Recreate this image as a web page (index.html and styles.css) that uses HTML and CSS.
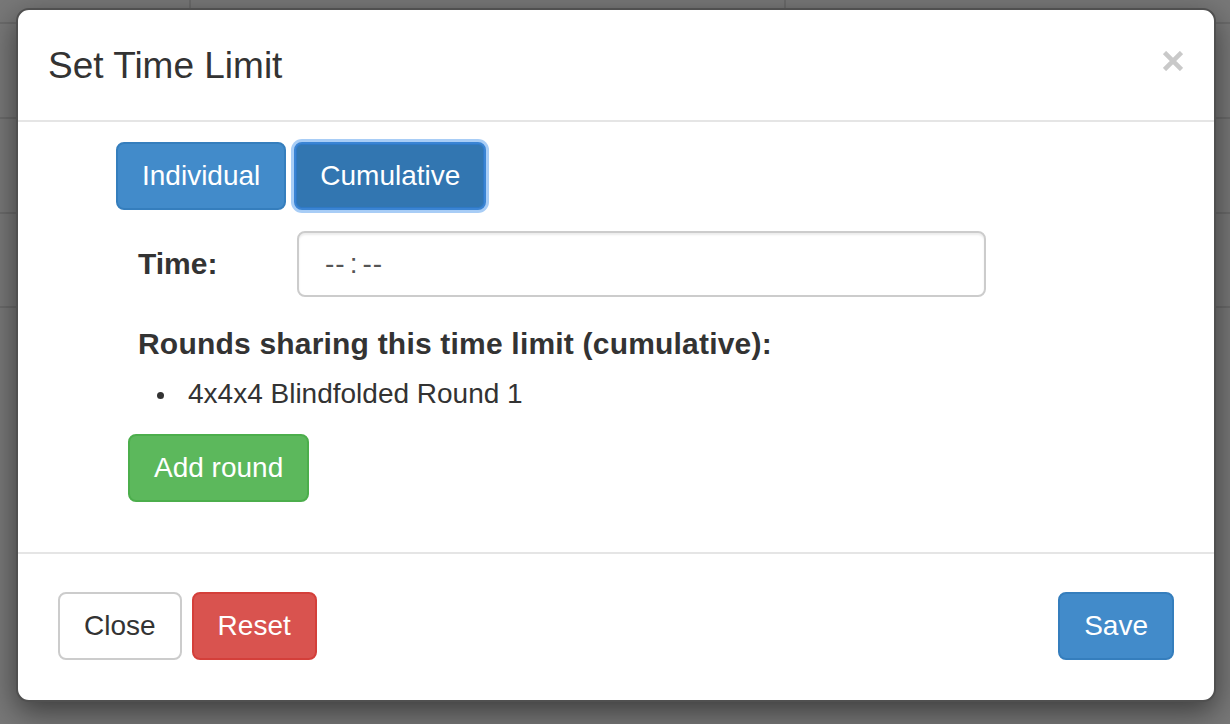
FILE: index.html
```html
<!DOCTYPE html>
<html lang="en">
<head>
<meta charset="utf-8">
<title>Set Time Limit</title>
<link rel="stylesheet" href="styles.css">
</head>
<body>
<div class="modal" role="dialog">
  <div class="modal-header">
    <h4 class="modal-title">Set Time Limit</h4>
    <button class="close" type="button" aria-label="Close">
      <svg width="20" height="20" viewBox="0 0 20 20"><path d="M1.5 1.5 L18.5 18.5 M18.5 1.5 L1.5 18.5" stroke="#c9c9c9" stroke-width="4.6" fill="none"/></svg>
    </button>
  </div>
  <div class="modal-body">
    <div class="mode-buttons">
      <button class="btn btn-primary" type="button">Individual</button>
      <button class="btn btn-primary btn-active" type="button">Cumulative</button>
    </div>
    <div class="time-row">
      <label class="time-label">Time:</label>
      <div class="form-control"><span class="field">--</span><span class="sep">:</span><span class="field">--</span></div>
    </div>
    <h5 class="rounds-heading">Rounds sharing this time limit (cumulative):</h5>
    <ul class="rounds-list">
      <li>4x4x4 Blindfolded Round 1</li>
    </ul>
    <button class="btn btn-success add-round" type="button">Add round</button>
  </div>
  <div class="modal-footer">
    <div class="footer-left">
      <button class="btn btn-default" type="button">Close</button>
      <button class="btn btn-danger" type="button">Reset</button>
    </div>
    <button class="btn btn-primary" type="button">Save</button>
  </div>
</div>
</body>
</html>
```

FILE: styles.css
```css
html, body {
  margin: 0;
  padding: 0;
}
body {
  width: 1230px;
  height: 724px;
  overflow: hidden;
  font-family: "Liberation Sans", Arial, Helvetica, sans-serif;
  color: #333;
  background-color: #787878;
  background-image:
    linear-gradient(#6b6b6b, #6b6b6b),
    linear-gradient(#6b6b6b, #6b6b6b),
    linear-gradient(#6b6b6b, #6b6b6b),
    linear-gradient(#6b6b6b, #6b6b6b),
    linear-gradient(#6b6b6b, #6b6b6b),
    linear-gradient(#6b6b6b, #6b6b6b);
  background-repeat: no-repeat;
  background-size: 100% 2px, 100% 2px, 100% 2px, 100% 2px, 2px 22px, 2px 22px;
  background-position: 0 22px, 0 117px, 0 212px, 0 306px, 189px 0, 784px 0;
}
.modal {
  margin: 8px 0 0 16px;
  width: 1200px;
  height: 694px;
  box-sizing: border-box;
  background: #fff;
  border: 2px solid #505050;
  border-radius: 13px;
  box-shadow: 0 10px 30px rgba(0, 0, 0, 0.5);
  display: flex;
  flex-direction: column;
}
.modal-header {
  display: flex;
  justify-content: space-between;
  align-items: flex-start;
  padding: 30px 31px 28px 30px;
  border-bottom: 2px solid #e5e5e5;
}
.modal-title {
  margin: 0;
  font-size: 37px;
  line-height: 52px;
  font-weight: 500;
  color: #333;
}
.close {
  margin: 11px 0 0 0;
  padding: 0;
  border: 0;
  background: transparent;
  width: 20px;
  height: 20px;
  display: block;
}
.close svg {
  display: block;
}
.modal-body {
  flex: 1;
  padding: 20px 30px 0 98px;
}
.btn {
  font-family: "Liberation Sans", Arial, Helvetica, sans-serif;
  font-size: 28px;
  line-height: 40px;
  padding: 12px 24px;
  border: 2px solid transparent;
  border-radius: 8px;
  color: #fff;
  cursor: pointer;
  display: inline-block;
  white-space: nowrap;
}
.btn-primary {
  background: #428bca;
  border-color: #357ebd;
}
.btn-active {
  background: #3276b1;
  border-color: #3a84d4;
  box-shadow: 0 0 0 3px #a8cdf6, inset 0 0 0 1px #2f79c6;
}
.btn-success {
  background: #5cb85c;
  border-color: #4cae4c;
}
.btn-danger {
  background: #d9534f;
  border-color: #d43f3a;
}
.btn-default {
  background: #fff;
  border-color: #ccc;
  color: #333;
}
.mode-buttons {
  display: flex;
  gap: 8px;
}
.time-row {
  display: flex;
  align-items: center;
  margin: 21px 0 0 22px;
}
.time-label {
  width: 159px;
  font-size: 30px;
  font-weight: bold;
  line-height: 36px;
}
.form-control {
  width: 689px;
  height: 66px;
  box-sizing: border-box;
  border: 2px solid #ccc;
  border-radius: 8px;
  box-shadow: inset 0 2px 2px rgba(0, 0, 0, 0.075);
  padding: 0 26px;
  font-size: 28px;
  line-height: 62px;
  color: #555;
}
.form-control .field {
  letter-spacing: 1px;
}
.form-control .sep {
  margin: 0 5px 0 4px;
}
.rounds-heading {
  margin: 29px 0 0 22px;
  font-size: 30px;
  line-height: 36px;
  font-weight: bold;
  letter-spacing: 0.2px;
}
.rounds-list {
  list-style: none;
  margin: 12px 0 0 0;
  padding: 0 0 0 72px;
  font-size: 28px;
  line-height: 40px;
}
.rounds-list li::before {
  content: "";
  display: inline-block;
  width: 7px;
  height: 7px;
  border-radius: 50%;
  background: #333;
  margin: 0 24px 0 -31px;
  vertical-align: middle;
}
.add-round {
  margin: 20px 0 0 12px;
}
.modal-footer {
  display: flex;
  justify-content: space-between;
  align-items: center;
  padding: 38px 40px 40px;
  border-top: 2px solid #e5e5e5;
}
.footer-left {
  display: flex;
  gap: 10px;
}
```
